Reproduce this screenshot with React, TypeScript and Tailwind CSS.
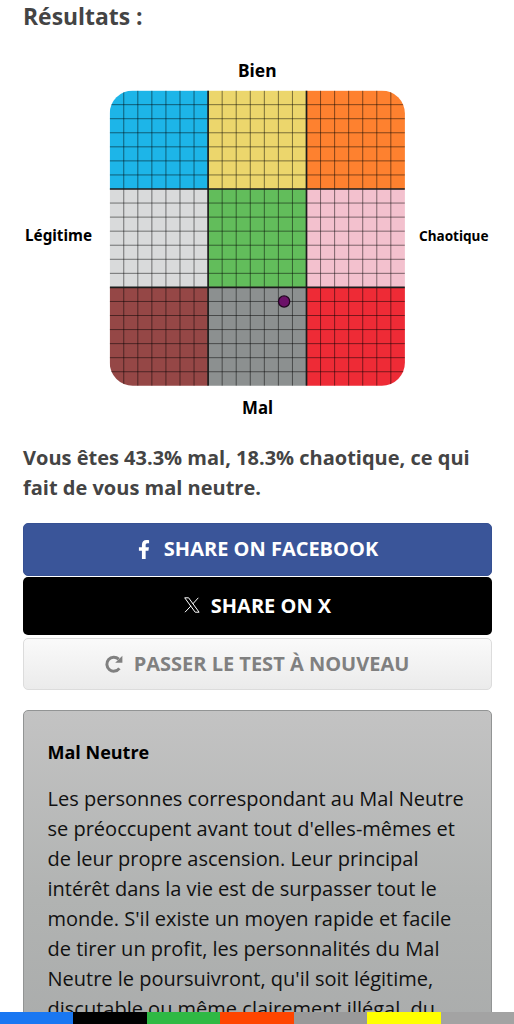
import { FaFacebookF } from "react-icons/fa";

const CELL = 98.4;
const STEP = CELL / 7;

const squares = [
  "#1db5e8", "#ecd66c", "#fe812f",
  "#d9dadb", "#62bd5b", "#f3c1ce",
  "#954746", "#8c9090", "#ee2b36",
];

const shareColors = [
  "bg-[#1977f2]",
  "bg-black",
  "bg-[#2fb944]",
  "bg-[#ff4500]",
  "bg-[#999999]",
  "bg-[#ffff00]",
  "bg-[#a3a3a3]",
];

const description = [
  "Les personnes correspondant au Mal Neutre",
  "se préoccupent avant tout d'elles-mêmes et",
  "de leur propre ascension. Leur principal",
  "intérêt dans la vie est de surpasser tout le",
  "monde. S'il existe un moyen rapide et facile",
  "de tirer un profit, les personnalités du Mal",
  "Neutre le poursuivront, qu'il soit légitime,",
  "discutable ou même clairement illégal, du",
];

const AlignmentChart = () => {
  const size = CELL * 3;
  const thin = Array.from({ length: 20 }, (_, i) => i + 1).filter((i) => i % 7 !== 0);

  return (
    <svg width="514" height="380" viewBox="0 0 514 380" className="block" fontFamily="'Noto Sans', 'Open Sans', sans-serif" fontWeight="700">
      <defs>
        <clipPath id="board">
          <rect width={size} height={size} rx="23" />
        </clipPath>
      </defs>
      <text x="238" y="37" fontSize="17" textLength="38.5" lengthAdjust="spacingAndGlyphs">Bien</text>
      <text x="25" y="201" fontSize="15.6" textLength="67" lengthAdjust="spacingAndGlyphs">Légitime</text>
      <text x="419" y="201" fontSize="14.4" textLength="69.5" lengthAdjust="spacingAndGlyphs">Chaotique</text>
      <text x="242" y="374" fontSize="17.4" textLength="31" lengthAdjust="spacingAndGlyphs">Mal</text>
      <g transform="translate(109.7 50.6)">
        <g clipPath="url(#board)">
          {squares.map((fill, i) => (
            <rect key={i} x={(i % 3) * CELL} y={Math.floor(i / 3) * CELL} width={CELL + 0.5} height={CELL + 0.5} fill={fill} />
          ))}
          {thin.map((i) => (
            <path key={i} d={`M${i * STEP} 0V${size}M0 ${i * STEP}H${size}`} stroke="#000" strokeOpacity="0.55" strokeWidth="0.9" />
          ))}
          {[1, 2].map((i) => (
            <path key={i} d={`M${i * CELL} 0V${size}M0 ${i * CELL}H${size}`} stroke="#1c1c1c" strokeWidth="1.7" />
          ))}
        </g>
        <circle cx="174.4" cy="210.9" r="5.6" fill="#6b1168" stroke="#21061f" strokeWidth="1.3" />
      </g>
    </svg>
  );
};

const XIcon = () => (
  <svg width="16" height="16" viewBox="0 0 16 16" fill="none" stroke="#fff" strokeWidth="1">
    <path d="M.7.8H4.6L15.1 15.2H11.2ZM14.3.8L8.8 6.9M7 8.9L1 15.2" />
  </svg>
);

const RetryIcon = () => (
  <svg width="18" height="18" viewBox="0 0 18 18" fill="none">
    <path d="M14.4 13.4A7 7 0 1 1 13.7 4.1" stroke="#808080" strokeWidth="3" />
    <path d="M17.4.7V7.7H10.2Z" fill="#808080" />
  </svg>
);

const App = () => {
  return (
    <div className="relative h-[1024px] w-[514px] overflow-hidden bg-white font-['Open_Sans',sans-serif]">
      <h2 className="h-[40px] pl-[23px] text-[22.9px] leading-[33px] font-bold whitespace-nowrap text-[#444]">Résultats :</h2>
      <AlignmentChart />
      <p className="mt-[23px] pl-[23px] text-[20px] leading-[30px] font-bold whitespace-nowrap text-[#444]">
        Vous êtes 43.3% mal, 18.3% chaotique, ce qui
        <br />
        fait de vous mal neutre.
      </p>

      <div className="mx-[23px] mt-[20px] flex w-[469px] flex-col text-[20px] font-bold text-white">
        <button className="flex h-[53px] items-center justify-center rounded-[5px] border border-[#365092] bg-[#3a5599] pb-px pl-px">
          <FaFacebookF className="mr-[14px] h-[19px] w-[12px]" />
          <span>SHARE ON FACEBOOK</span>
        </button>
        <button className="mt-px flex h-[58px] items-center justify-center rounded-[5px] bg-black">
          <span className="mr-[11px] pb-[3px]"><XIcon /></span>
          <span>SHARE ON X</span>
        </button>
        <button className="mt-[3px] flex h-[52px] items-center justify-center rounded-[5px] border border-[#dcdcdc] bg-linear-to-b from-[#fafafa] to-[#ebebeb] pr-px text-[#808080]">
          <span className="mr-[11px]"><RetryIcon /></span>
          <span>PASSER LE TEST À NOUVEAU</span>
        </button>
      </div>

      <section className="mx-[23px] mt-[20px] h-[420px] w-[469px] rounded-[5px] border border-[#929494] bg-linear-to-b from-[#c3c3c3] via-[#b1b3b2] via-45% to-[#a5a7a7] pt-[26px] pl-[23.5px] text-[#111]">
        <h3 className="text-[18px] leading-[30px] font-bold text-black">Mal Neutre</h3>
        <div className="mt-[17.4px] text-[20px] leading-[30px] whitespace-nowrap">
          {description.map((line) => (
            <p key={line}>{line}</p>
          ))}
        </div>
      </section>

      <div className="absolute inset-x-0 bottom-0 flex h-[12px]">
        {shareColors.map((color) => (
          <div key={color} className={`flex-1 ${color}`} />
        ))}
      </div>
    </div>
  );
};

export default App;
